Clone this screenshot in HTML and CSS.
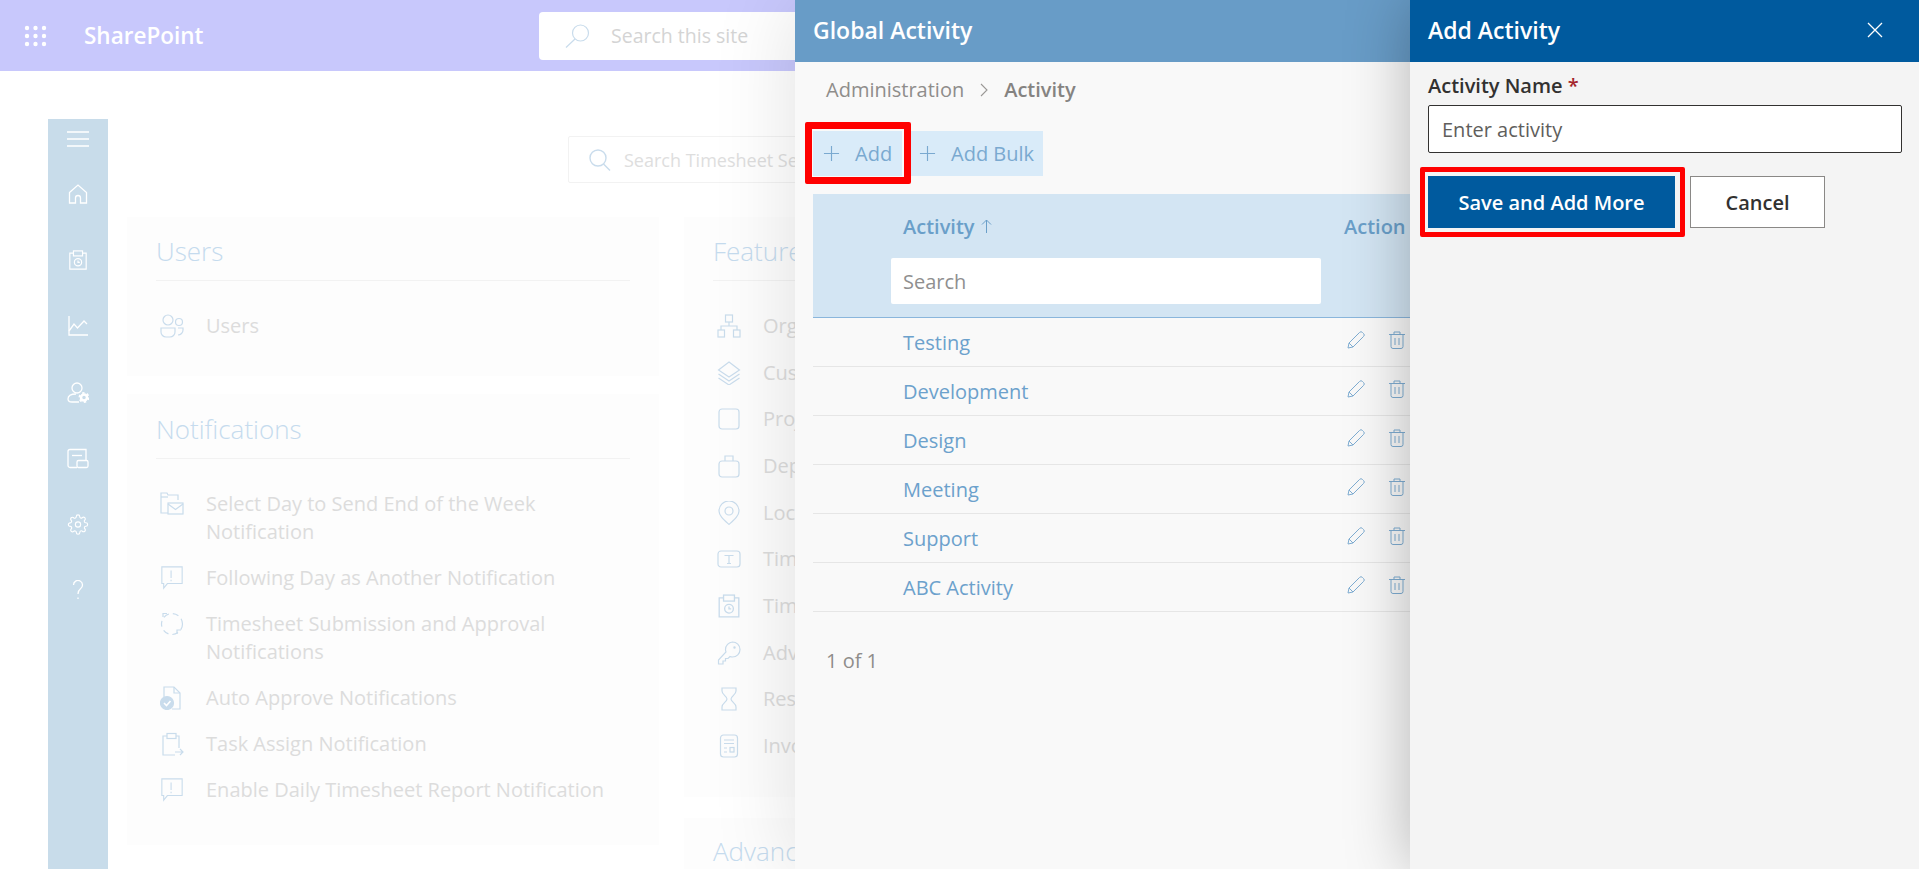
FILE: index.html
```html
<!DOCTYPE html>
<html lang="en">
<head>
    <meta charset="UTF-8">
    <title>Global Activity</title>
    <link rel="stylesheet" href="styles.css">
</head>
<body>
    <!-- Shared icons -->
    <svg class="sprite" width="0" height="0">
        <symbol id="i-sheet" viewBox="0 0 20 22"><path d="M5 3.5H1v17.500h18V3.500h-4"/><rect x="5" y="1" width="10" height="5.500"/><circle cx="10" cy="13.500" r="4"/><path d="M10 11.500v2.200h2"/></symbol>
        <symbol id="i-comment" viewBox="0 0 24 26"><path d="M1 1h22v18H7l-4 5v-5H1z"/><path d="M11 5v8M11 15v1.500"/></symbol>
        <symbol id="i-pencil" viewBox="0 0 18 18"><path d="M1 17l1-5L12.500 1.500a2 2 0 0 1 3 0l1 1a2 2 0 0 1 0 3L6 16z"/><path d="M2 12l4 4"/></symbol>
        <symbol id="i-trash" viewBox="0 0 18 18"><path d="M1 3.500h16M6 3.500V1h6v2.500M3 3.500V15.500a2 2 0 0 0 2 2h8a2 2 0 0 0 2-2V3.500M7 7v7M11 7v7"/></symbol>
        <symbol id="i-plus" viewBox="0 0 18 18"><path d="M9 1v16M1 9h16"/></symbol>
    </svg>

    <!-- Page behind the panels -->
    <div class="page">
        <header class="topbar">
            <svg class="waffle" viewBox="0 0 23 22"><g fill="#fff"><circle cx="3" cy="3" r="2.200"/><circle cx="11.500" cy="3" r="2.200"/><circle cx="20" cy="3" r="2.200"/><circle cx="3" cy="11" r="2.200"/><circle cx="11.500" cy="11" r="2.200"/><circle cx="20" cy="11" r="2.200"/><circle cx="3" cy="19" r="2.200"/><circle cx="11.500" cy="19" r="2.200"/><circle cx="20" cy="19" r="2.200"/></g></svg>
            <span class="brand">SharePoint</span>
            <div class="site-search">
                <svg class="site-search-icon" viewBox="0 0 25 24"><circle cx="15.500" cy="9" r="8"/><path d="M10 15L1 23.500"/></svg>
                <span>Search this site</span>
            </div>
        </header>

        <div class="main">
            <nav class="sidebar">
                <svg class="nav-icon burger" viewBox="0 0 22 16"><path d="M0 1h22M0 8h22M0 15h22"/></svg>
                <svg class="nav-icon" viewBox="0 0 20 20"><path d="M1.500 8.500L10 1l8.500 7.500V19h-6v-5a2.500 2.500 0 0 0-5 0v5h-6z"/></svg>
                <svg class="nav-icon"><use href="#i-sheet"/></svg>
                <svg class="nav-icon" viewBox="0 0 20 20"><path d="M1 0v19h19"/><path d="M1 15l5-7 3.500 4L16 5l3 3"/></svg>
                <svg class="nav-icon wide" viewBox="0 0 22 21"><circle cx="10" cy="6" r="5"/><path d="M9 12C4 12 1 14 1 17s2 3 4 3h7"/><circle class="cog" cx="17" cy="15.500" r="3"/><circle class="cog-teeth" cx="17" cy="15.500" r="4.600"/></svg>
                <svg class="nav-icon wide" viewBox="0 0 22 20"><path d="M10 19H3a2 2 0 0 1-2-2V3a2 2 0 0 1 2-2h16v11"/><path d="M5 7h10"/><rect x="10" y="12" width="11" height="7" rx="1.500"/></svg>
                <svg class="nav-icon wide" viewBox="0 0 24 24"><circle cx="12" cy="12" r="3"/><path d="M19.400 15a1.650 1.650 0 0 0 .33 1.820l.06.06a2 2 0 0 1 0 2.830 2 2 0 0 1-2.830 0l-.06-.06a1.650 1.650 0 0 0-1.820-.33 1.650 1.650 0 0 0-1 1.510V21a2 2 0 0 1-2 2 2 2 0 0 1-2-2v-.09A1.650 1.650 0 0 0 9 19.400a1.650 1.650 0 0 0-1.820.33l-.06.06a2 2 0 0 1-2.830 0 2 2 0 0 1 0-2.830l.06-.06a1.650 1.650 0 0 0 .33-1.820 1.650 1.650 0 0 0-1.510-1H3a2 2 0 0 1-2-2 2 2 0 0 1 2-2h.09A1.650 1.650 0 0 0 4.600 9a1.650 1.650 0 0 0-.33-1.820l-.06-.06a2 2 0 0 1 0-2.830 2 2 0 0 1 2.830 0l.06.06a1.650 1.650 0 0 0 1.820.33H9a1.650 1.650 0 0 0 1-1.510V3a2 2 0 0 1 2-2 2 2 0 0 1 2 2v.09a1.650 1.650 0 0 0 1 1.510 1.650 1.650 0 0 0 1.820-.33l.06-.06a2 2 0 0 1 2.830 0 2 2 0 0 1 0 2.830l-.06.06a1.650 1.650 0 0 0-.33 1.820V9a1.650 1.650 0 0 0 1.510 1H21a2 2 0 0 1 2 2 2 2 0 0 1-2 2h-.09a1.650 1.650 0 0 0-1.510 1z"/></svg>
                <svg class="nav-icon" viewBox="0 0 20 20"><path d="M5.500 5a4.500 4.500 0 1 1 7 3.700C10.800 10 10 11 10 14"/><path d="M10 17.500v1.500"/></svg>
            </nav>

            <div class="content">
                <div class="search-row">
                    <div class="ts-search">
                        <svg class="ts-search-icon" viewBox="0 0 22 22"><circle cx="9" cy="9" r="8"/><path d="M14.500 15L21 21.500"/></svg>
                        <span>Search Timesheet Settings</span>
                    </div>
                </div>

                <div class="cards">
                    <div class="col">
                        <section class="card card-users">
                            <h2 class="card-title">Users</h2>
                            <ul class="rows">
                                <li class="row">
                                    <svg class="row-icon" viewBox="0 0 24 24"><circle cx="8" cy="6" r="5"/><circle cx="19" cy="8" r="3.500"/><path d="M1 14h14v4a5 5 0 0 1-5 5H6a5 5 0 0 1-5-5zM18 14h5v2a5 5 0 0 1-5 5"/></svg>
                                    <span>Users</span>
                                </li>
                            </ul>
                        </section>
                        <section class="card card-notify">
                            <h2 class="card-title">Notifications</h2>
                            <ul class="rows">
                                <li class="row">
                                    <svg class="row-icon" viewBox="0 0 24 24"><path d="M8 21H1V1h6l1 2h10v5"/><path d="M1 5h7"/><rect x="8" y="11" width="15" height="11"/><path d="M8 12l7.500 5.500L23 12"/></svg>
                                    <span>Select Day to Send End of the Week Notification</span>
                                </li>
                                <li class="row">
                                    <svg class="row-icon"><use href="#i-comment"/></svg>
                                    <span>Following Day as Another Notification</span>
                                </li>
                                <li class="row">
                                    <svg class="row-icon" viewBox="0 0 24 24"><circle class="dash" cx="12" cy="12" r="10.500"/><path d="M3 5V1.500h4M17 22v-4h4"/></svg>
                                    <span>Timesheet Submission and Approval Notifications</span>
                                </li>
                                <li class="row">
                                    <svg class="row-icon" viewBox="0 0 24 24"><path d="M4 11V1h10l6 6v16H12"/><path d="M14 1v6h6"/><circle class="solid" cx="7" cy="17" r="6.500"/><path class="tick" d="M4 17l2.500 2.500L10.500 15"/></svg>
                                    <span>Auto Approve Notifications</span>
                                </li>
                                <li class="row">
                                    <svg class="row-icon" viewBox="0 0 24 24"><path d="M7 4H3v19h12M16 4h3v12"/><rect x="7" y="1.500" width="9" height="5"/><path d="M15 20h8M20 17l3 3-3 3"/></svg>
                                    <span>Task Assign Notification</span>
                                </li>
                                <li class="row">
                                    <svg class="row-icon"><use href="#i-comment"/></svg>
                                    <span>Enable Daily Timesheet Report Notification</span>
                                </li>
                            </ul>
                        </section>
                    </div>

                    <div class="col">
                        <section class="card card-feature">
                            <h2 class="card-title">Features</h2>
                            <ul class="rows rows-feature">
                                <li class="row">
                                    <svg class="row-icon" viewBox="0 0 24 24"><rect x="8.500" y="1" width="7" height="7"/><rect x="1" y="16" width="6.500" height="7"/><rect x="16.500" y="16" width="6.500" height="7"/><path d="M12 8v4M4 16v-4h16v4"/></svg>
                                    <span>Organization</span>
                                </li>
                                <li class="row">
                                    <svg class="row-icon" viewBox="0 0 24 24"><path d="M12 1l10.500 8L12 16 1.500 9zM1.500 13L12 20l10.500-7M1.500 17L12 24l10.500-7"/></svg>
                                    <span>Customers</span>
                                </li>
                                <li class="row">
                                    <svg class="row-icon" viewBox="0 0 24 24"><rect x="2" y="2" width="20" height="20" rx="3"/></svg>
                                    <span>Projects</span>
                                </li>
                                <li class="row">
                                    <svg class="row-icon" viewBox="0 0 24 24"><rect x="2" y="7" width="20" height="16" rx="3"/><path d="M8 7V2h8v5"/></svg>
                                    <span>Departments</span>
                                </li>
                                <li class="row">
                                    <svg class="row-icon" viewBox="0 0 24 24"><path d="M12 23.500C6 18 2 14.500 2 10a10 10 0 0 1 20 0c0 4.500-4 8-10 13.500z"/><circle cx="12" cy="10" r="4"/></svg>
                                    <span>Locations</span>
                                </li>
                                <li class="row">
                                    <svg class="row-icon" viewBox="0 0 24 24"><rect x="1" y="4" width="22" height="16" rx="3"/><path d="M7.500 8.500h9M12 8.500v8M10 16.500h4"/></svg>
                                    <span>Time Types</span>
                                </li>
                                <li class="row">
                                    <svg class="row-icon"><use href="#i-sheet"/></svg>
                                    <span>Timesheet</span>
                                </li>
                                <li class="row">
                                    <svg class="row-icon" viewBox="0 0 24 24"><path d="M15.500 1a7.500 7.500 0 0 1 0 15c-1 0-2-.2-2.500-.5L11 17.500H8.500V20H6v3H1.500v-4L9 11c-.5-1-.5-1.500-.5-2.500A7.500 7.500 0 0 1 15.500 1z"/><circle cx="17.500" cy="6.500" r=".6"/></svg>
                                    <span>Adv</span>
                                </li>
                                <li class="row">
                                    <svg class="row-icon" viewBox="0 0 24 24"><path d="M5 1h14v3c0 4-5 5-5 8s5 4 5 8v3H5v-3c0-4 5-5 5-8S5 8 5 4z"/></svg>
                                    <span>Reset Timer</span>
                                </li>
                                <li class="row">
                                    <svg class="row-icon" viewBox="0 0 24 24"><rect x="3.500" y="1" width="17" height="22" rx="3"/><path d="M7 6h10M7 9.500h10M7 14h3M7 18h3"/><rect x="13" y="13.500" width="4" height="4.500"/></svg>
                                    <span>Invoice</span>
                                </li>
                            </ul>
                        </section>
                        <section class="card card-advanced">
                            <h2 class="card-title">Advanced</h2>
                        </section>
                    </div>
                </div>
            </div>
        </div>
    </div>

    <!-- Global Activity panel -->
    <aside class="panel panel-global">
        <div class="panel-head">Global Activity</div>
        <div class="crumbs">
            <span>Administration</span>
            <svg class="crumb-sep" viewBox="0 0 8 14"><path d="M1 1l6 6-6 6"/></svg>
            <span class="crumb-current">Activity</span>
        </div>
        <div class="toolbar">
            <button class="tool-btn tool-add"><svg class="plus"><use href="#i-plus"/></svg>Add</button>
            <button class="tool-btn tool-bulk"><svg class="plus"><use href="#i-plus"/></svg>Add Bulk</button>
        </div>
        <div class="grid-head">
            <div>
                <div class="col-name">Activity <svg class="sort-arrow" viewBox="0 0 11 14"><path d="M5.500 14V1M1 5.500L5.500 1 10 5.500"/></svg></div>
                <input class="grid-search" placeholder="Search">
            </div>
            <div class="col-name col-action">Action</div>
        </div>
        <div class="grid-row"><span>Testing</span><div class="actions"><svg class="act"><use href="#i-pencil"/></svg><svg class="act"><use href="#i-trash"/></svg></div></div>
        <div class="grid-row"><span>Development</span><div class="actions"><svg class="act"><use href="#i-pencil"/></svg><svg class="act"><use href="#i-trash"/></svg></div></div>
        <div class="grid-row"><span>Design</span><div class="actions"><svg class="act"><use href="#i-pencil"/></svg><svg class="act"><use href="#i-trash"/></svg></div></div>
        <div class="grid-row"><span>Meeting</span><div class="actions"><svg class="act"><use href="#i-pencil"/></svg><svg class="act"><use href="#i-trash"/></svg></div></div>
        <div class="grid-row"><span>Support</span><div class="actions"><svg class="act"><use href="#i-pencil"/></svg><svg class="act"><use href="#i-trash"/></svg></div></div>
        <div class="grid-row"><span>ABC Activity</span><div class="actions"><svg class="act"><use href="#i-pencil"/></svg><svg class="act"><use href="#i-trash"/></svg></div></div>
        <div class="pager">1 of 1</div>
    </aside>

    <!-- Add Activity panel -->
    <aside class="panel panel-add">
        <div class="panel-head panel-head-add">
            <span>Add Activity</span>
            <svg class="close" viewBox="0 0 16 16"><path d="M1 1l14 14M15 1L1 15"/></svg>
        </div>
        <div class="form">
            <label class="field-label">Activity Name <span class="req">*</span></label>
            <input class="field-input" placeholder="Enter activity">
            <div class="form-btns">
                <button class="btn btn-save">Save and Add More</button>
                <button class="btn btn-cancel">Cancel</button>
            </div>
        </div>
    </aside>
</body>
</html>
```

FILE: styles.css
```css
/* General */
* {
    box-sizing: border-box;
}

html,
body {
    height: 869px;
    margin: 0;
    overflow: hidden;
}

body {
    font-family: "Open Sans", "Noto Sans", sans-serif;
    font-size: 20px;
    background-color: #fff;
}

.sprite {
    position: absolute;
}

svg {
    display: block;
    flex: none;
    fill: none;
}

ul {
    list-style: none;
    margin: 0;
    padding: 0;
}

/* Top bar */
.topbar {
    display: flex;
    align-items: center;
    height: 71px;
    background-color: #c8c8fc;
}

.waffle {
    width: 23px;
    height: 22px;
    margin-left: 24px;
}

.brand {
    flex: none;
    width: 455px;
    margin-left: 37px;
    color: #fff;
    font-size: 22.500px;
    font-weight: 600;
}

.site-search {
    display: flex;
    align-items: center;
    width: 400px;
    height: 48px;
    padding-left: 26px;
    border-radius: 4px;
    background-color: #fff;
    color: #d4d4d4;
    font-size: 19.500px;
}

.site-search-icon {
    width: 25px;
    height: 24px;
    margin-right: 21px;
    stroke: #c9dcec;
    stroke-width: 1.200;
}

/* Layout under the bar */
.main {
    display: flex;
    padding-top: 48px;
    padding-left: 48px;
}

.sidebar {
    display: flex;
    flex-direction: column;
    align-items: center;
    width: 60px;
    height: 750px;
    padding-top: 12px;
    background-color: #c8dcea;
}

.nav-icon {
    width: 20px;
    height: 20px;
    margin-bottom: 46px;
    stroke: #fff;
    stroke-width: 1.300;
}

.nav-icon.burger {
    width: 22px;
    height: 16px;
    margin-bottom: 37px;
}

.nav-icon.wide {
    width: 22px;
    height: 21px;
    margin-bottom: 45px;
}

.cog {
    stroke-width: 2.500;
}

.cog-teeth {
    stroke-width: 1.800;
    stroke-dasharray: 2.400 2.400;
}

.content {
    flex: 1;
    padding-left: 19px;
}

/* Timesheet search */
.search-row {
    padding-top: 17px;
    padding-left: 441px;
    height: 98px;
}

.ts-search {
    display: flex;
    align-items: center;
    width: 600px;
    height: 47px;
    padding-left: 20px;
    border: 1px solid #f2f2f2;
    border-radius: 2px;
    color: #dedede;
    font-size: 18px;
    white-space: nowrap;
}

.ts-search-icon {
    width: 22px;
    height: 22px;
    margin-right: 13px;
    stroke: #c9dcec;
    stroke-width: 1.400;
}

/* Cards */
.cards {
    display: flex;
    gap: 25px;
}

.col {
    display: flex;
    flex-direction: column;
    width: 532px;
    flex: none;
}

.card {
    padding: 17px 29px 0;
    background-color: #fdfdfd;
}

.card-users {
    height: 159px;
    margin-bottom: 18px;
}

.card-notify {
    height: 451px;
    padding-top: 18px;
}

.card-feature {
    height: 580px;
    margin-bottom: 21px;
}

.card-advanced {
    height: 60px;
    padding-top: 16px;
}

.card-title {
    margin: 0;
    padding-bottom: 12px;
    border-bottom: 1px solid #f2f2f2;
    color: #c5dbee;
    font-size: 26px;
    font-weight: 300;
    line-height: 34px;
    white-space: nowrap;
}

.rows {
    display: flex;
    flex-direction: column;
    gap: 18px;
    margin-top: 31px;
}

.rows-feature {
    gap: 18.670px;
}

.row {
    display: flex;
    gap: 22px;
    padding-left: 4px;
    color: #dcdcdc;
    font-size: 20px;
    line-height: 28px;
}

.row-icon {
    width: 24px;
    height: 24px;
    margin-top: 2px;
    stroke: #c9dcec;
    stroke-width: 1.200;
}

.dash {
    stroke-dasharray: 6 4;
}

.solid {
    fill: #c9dcec;
}

.tick {
    stroke: #fff;
    stroke-width: 1.600;
}

/* Side panels */
.panel {
    position: absolute;
    top: 0;
    height: 869px;
    overflow: hidden;
}

.panel-global {
    left: 795px;
    width: 700px;
    background-color: #f9f9f9;
    box-shadow: 0 0 80px rgba(0, 0, 0, 0.12);
    overflow: visible;
    clip-path: inset(0 0 0 -120px);
}

.panel-add {
    left: 1410px;
    width: 509px;
    background-color: #f4f4f4;
    box-shadow: 0 0 60px rgba(0, 0, 0, 0.28);
    overflow: visible;
}

.panel-head {
    display: flex;
    align-items: center;
    height: 62px;
    padding-left: 18px;
    padding-bottom: 2px;
    background-color: #689cc7;
    color: #fff;
    font-size: 23px;
    font-weight: 600;
}

.panel-head-add {
    justify-content: space-between;
    padding-right: 36px;
    background-color: #005a9e;
}

.close {
    width: 16px;
    height: 16px;
    stroke: #fff;
    stroke-width: 1.300;
}

/* Breadcrumb */
.crumbs {
    display: flex;
    align-items: center;
    gap: 16px;
    height: 30px;
    margin-top: 13px;
    padding-left: 31px;
    color: #8f8d8b;
    line-height: 30px;
}

.crumb-sep {
    width: 8px;
    height: 14px;
    stroke: #9a9896;
    stroke-width: 1.100;
}

.crumb-current {
    font-weight: 600;
    color: #858381;
}

/* Toolbar */
.toolbar {
    display: flex;
    gap: 9px;
    margin-top: 26px;
    padding-left: 18px;
}

.tool-btn {
    position: relative;
    display: flex;
    align-items: center;
    gap: 15px;
    height: 45px;
    padding: 0 10px;
    border: none;
    background-color: #d9ebf9;
    color: #7aa9d0;
    font-family: inherit;
    font-size: 20px;
    white-space: nowrap;
}

.tool-add {
    width: 89px;
}

.tool-bulk {
    width: 132px;
    padding-left: 8px;
}

.tool-add::after {
    content: "";
    position: absolute;
    top: -9px;
    right: -9px;
    bottom: -8px;
    left: -8px;
    border: 7px solid #f00;
    border-radius: 2px;
}

.plus {
    width: 17px;
    height: 17px;
    stroke: #7aa9d0;
    stroke-width: 1.200;
}

/* Activity grid */
.grid-head {
    display: grid;
    grid-template-columns: 453px 1fr;
    height: 124px;
    margin-top: 18px;
    margin-left: 18px;
    padding-top: 17px;
    padding-left: 78px;
    border-bottom: 1px solid #8ab6dc;
    background-color: #d3e5f3;
}

.col-name {
    display: flex;
    align-items: center;
    gap: 6px;
    height: 30px;
    padding-left: 12px;
    color: #6a9fc9;
    font-weight: 600;
}

.col-action {
    padding-left: 0;
}

.sort-arrow {
    width: 11px;
    height: 14px;
    stroke: #6a9fc9;
}

.grid-search {
    display: block;
    width: 430px;
    height: 46px;
    margin-top: 17px;
    padding: 0 12px;
    border: none;
    border-radius: 2px;
    font-family: inherit;
    font-size: 20px;
}

.grid-search::placeholder {
    color: #8f8f8f;
}

.grid-row {
    display: grid;
    grid-template-columns: 441px 1fr;
    align-items: center;
    height: 49px;
    margin-left: 18px;
    padding-left: 90px;
    border-bottom: 1px solid #e6e6e6;
    color: #6ca1cc;
}

.actions {
    display: flex;
    gap: 23px;
    margin-bottom: 4px;
    padding-left: 3px;
}

.act {
    width: 18px;
    height: 18px;
    stroke: #7fadd2;
    stroke-width: 1;
}

.pager {
    margin-top: 34px;
    padding-left: 31px;
    color: #8f8d8b;
    line-height: 30px;
}

/* Add form */
.form {
    padding: 10px 18px 0;
}

.field-label {
    display: block;
    color: #323130;
    font-weight: 600;
    line-height: 28px;
}

.req {
    color: #a4262c;
}

.field-input {
    display: block;
    width: 474px;
    height: 48px;
    margin-top: 5px;
    padding: 0 13px;
    border: 1px solid #323130;
    border-radius: 2px;
    background-color: #fff;
    font-family: inherit;
    font-size: 20px;
}

.field-input::placeholder {
    color: #605e5c;
}

.form-btns {
    display: flex;
    gap: 15px;
    margin-top: 23px;
}

.btn {
    position: relative;
    height: 52px;
    border: 1px solid #8a8886;
    font-family: inherit;
    font-size: 20px;
    font-weight: 600;
}

.btn-save {
    width: 247px;
    border: none;
    background-color: #005a9e;
    color: #fff;
}

.btn-save::after {
    content: "";
    position: absolute;
    top: -9px;
    right: -10px;
    bottom: -9px;
    left: -8px;
    border: 5px solid #f00;
    border-radius: 2px;
}

.btn-cancel {
    width: 135px;
    background-color: #fff;
    color: #323130;
}
```
